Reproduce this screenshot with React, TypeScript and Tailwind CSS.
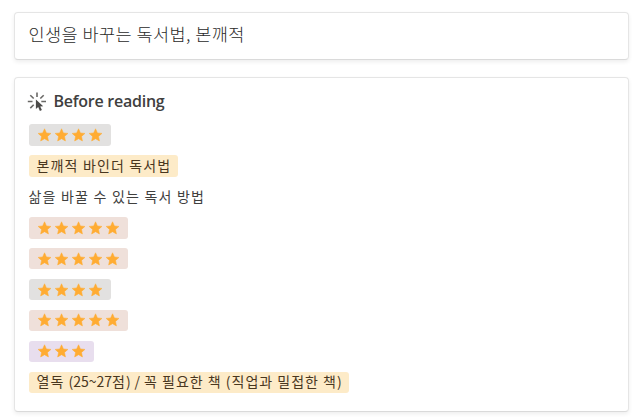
import type { ReactNode } from "react";

const rows = [
  { id: "rating", stars: 4, className: "bg-[#e2e1e0] px-[7px]" },
  {
    id: "method",
    text: "본깨적 바인더 독서법",
    className: "bg-[#fdebc8] pr-[6.5px] pl-2 pb-px tracking-[1.15px] text-[#49371f]",
  },
  { id: "summary", text: "삶을 바꿀 수 있는 독서 방법", className: "pb-px tracking-[1.2px]" },
  { id: "score-1", stars: 5, className: "bg-[#efe0da] px-[7px]" },
  { id: "score-2", stars: 5, className: "bg-[#efe0da] px-[7px]" },
  { id: "score-3", stars: 4, className: "bg-[#e2e1e0] px-[7px]" },
  { id: "score-4", stars: 5, className: "bg-[#efe0da] px-[7px]" },
  { id: "score-5", stars: 3, className: "bg-[#e8deee] px-[7px]" },
  {
    id: "category",
    text: (
      <p>
        열독 <span className="tracking-normal">(25~27</span>점
        <span className="tracking-[0.4px]">) / </span>꼭 필요한 책 (직업과 밀접한 책)
      </p>
    ),
    className: "bg-[#fdebc8] pr-[6px] pl-2 pb-px tracking-[1px] text-[#49371f]",
  },
];

function Card({ className, children }: { className: string; children: ReactNode }) {
  return (
    <section
      className={`rounded-[4px] border border-[#e5e5e5] border-b-[#dadada] bg-white px-[13.5px] shadow-[0_2px_4px_rgba(0,0,0,0.07)] ${className}`}
    >
      {children}
    </section>
  );
}

function ClickIcon() {
  return (
    <svg viewBox="0 0 20 20" className="-ml-[1.5px] mr-[0.5px] h-5 w-5 shrink-0" aria-hidden="true">
      <path
        d="M10 1.5v4.6M.8 10.5h4.7M14.3 10.5h4.7M3.3 4.2l3.4 3.3M16.7 4.2l-3.4 3.3M3.3 17.1l3.4-3.3"
        fill="none"
        stroke="#696866"
        strokeWidth="1.6"
      />
      <path d="M8.9 8.5v9.6l2.3-2 1.7 3.8 2-.9-1.7-3.6 3-.2z" fill="#4b4a48" />
    </svg>
  );
}

function Star() {
  return (
    <svg viewBox="0 0 17 14" className="h-3.5 w-[17.1px] shrink-0" aria-hidden="true">
      <path
        d="M8.5.8l1.9 4.1 4.5.5-3.4 3 .9 4.6-3.9-2.3L4.6 13l.9-4.6-3.4-3 4.5-.5z"
        fill="#ffac33"
        stroke="#ffac33"
        strokeWidth=".5"
        strokeLinejoin="round"
      />
    </svg>
  );
}

export default function App() {
  return (
    <main className="flex h-[419px] w-[640px] flex-col gap-[17px] overflow-hidden bg-white pt-3 pr-[11px] pl-[14px] font-['Open_Sans','Noto_Sans_CJK_KR',sans-serif] text-[#40403e]">
      <Card className="flex h-12 shrink-0 items-center">
        <h1 className="pb-[4px] font-['Noto_Sans_CJK_KR',sans-serif] text-[17.5px] leading-6 font-light tracking-[0.45px] whitespace-nowrap text-[#2a2a29]">
          인생을 바꾸는 독서법, 본깨적
        </h1>
      </Card>

      <Card className="h-[335px] shrink-0 pt-[13px]">
        <div className="flex h-5 items-center gap-1.5">
          <ClickIcon />
          <h2 className="text-[16px] leading-5 font-semibold tracking-[-0.25px]">Before reading</h2>
        </div>
        <ul className="mt-[13.4px] flex flex-col items-start gap-[9.4px]">
          {rows.map((row) => (
            <li
              key={row.id}
              className={`flex h-[21.5px] items-center rounded-[3px] font-['Noto_Sans_CJK_KR',sans-serif] text-[14px] whitespace-nowrap ${row.className}`}
            >
              {row.stars
                ? Array.from({ length: row.stars }, (_, i) => <Star key={i} />)
                : row.text}
            </li>
          ))}
        </ul>
      </Card>
    </main>
  );
}
